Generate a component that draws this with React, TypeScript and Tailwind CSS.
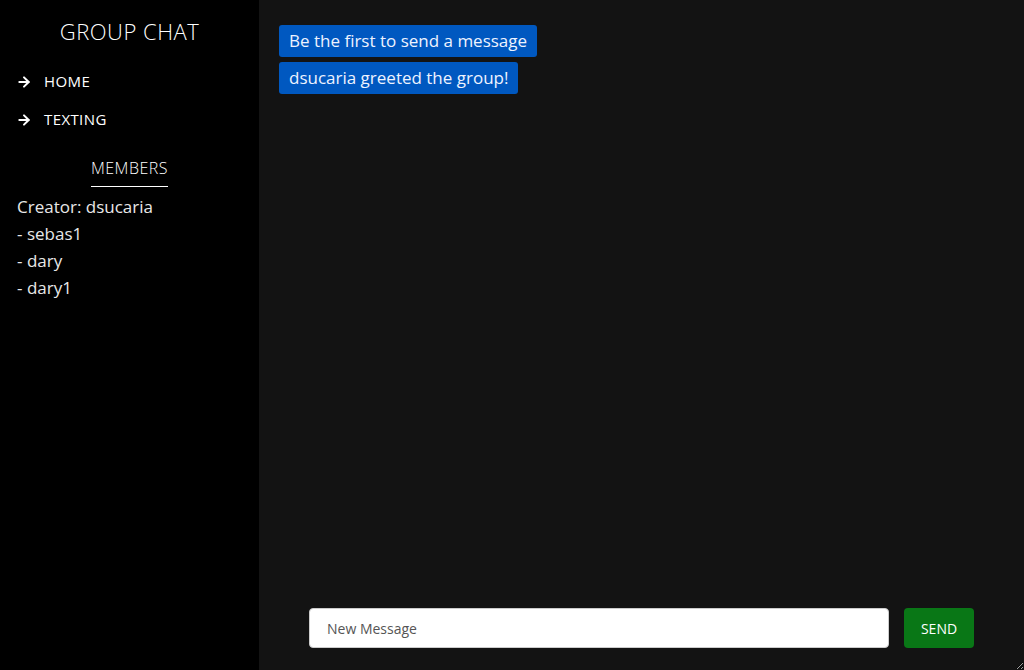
import { ArrowRight } from "lucide-react";

const members = ["sebas1", "dary", "dary1"];
const messages = ["Be the first to send a message", "dsucaria greeted the group!"];

export default function App() {
  return (
    <div className="flex h-[670px] w-full font-['Open_Sans',sans-serif] text-white">
      {/* Sidebar */}
      <aside className="w-[259px] shrink-0 bg-black flex flex-col">
        <h1 className="pt-[16px] text-center text-[22px] font-light tracking-[0.5px] leading-[30px]">
          GROUP CHAT
        </h1>
        <nav className="mt-[25px] flex flex-col gap-[17px] px-[16px]">
          {["HOME", "TEXTING"].map((item) => (
            <a key={item} href="#" className="flex items-center gap-[12px] text-[15px] leading-[21px] tracking-[0.4px]">
              <ArrowRight size={16} strokeWidth={3} />
              {item}
            </a>
          ))}
        </nav>
        <div className="mt-[28px] flex justify-center">
          <h2 className="border-b border-white pb-[8px] text-[16px] leading-[20px] font-light tracking-[0.5px]">
            MEMBERS
          </h2>
        </div>
        <ul className="mt-[6px] px-[17px] text-[17px] leading-[27px] text-[#e8e8e8]">
          <li>Creator: dsucaria</li>
          {members.map((m) => (
            <li key={m}>- {m}</li>
          ))}
        </ul>
      </aside>

      {/* Main */}
      <main className="flex-1 bg-[#131313] flex flex-col resize overflow-auto">
        <div className="flex-1 flex flex-col items-start gap-[5px] pt-[25px] pl-[20px]">
          {messages.map((m) => (
            <div key={m} className="rounded-[3px] bg-[#0058c0] px-[10px] h-[32px] flex items-center text-[17px] text-[#eef3ff]">
              {m}
            </div>
          ))}
        </div>
        <div className="flex items-center gap-[15px] pl-[50px] pb-[22px]">
          <input
            type="text"
            placeholder="New Message"
            className="h-[40px] w-[580px] rounded-[4px] border border-[#ccc] bg-white px-[17px] text-[14px] text-black placeholder:text-[#555] outline-none"
          />
          <button className="h-[40px] w-[70px] rounded-[4px] bg-[#097716] text-[14px] text-white">
            SEND
          </button>
        </div>
      </main>
    </div>
  );
}
